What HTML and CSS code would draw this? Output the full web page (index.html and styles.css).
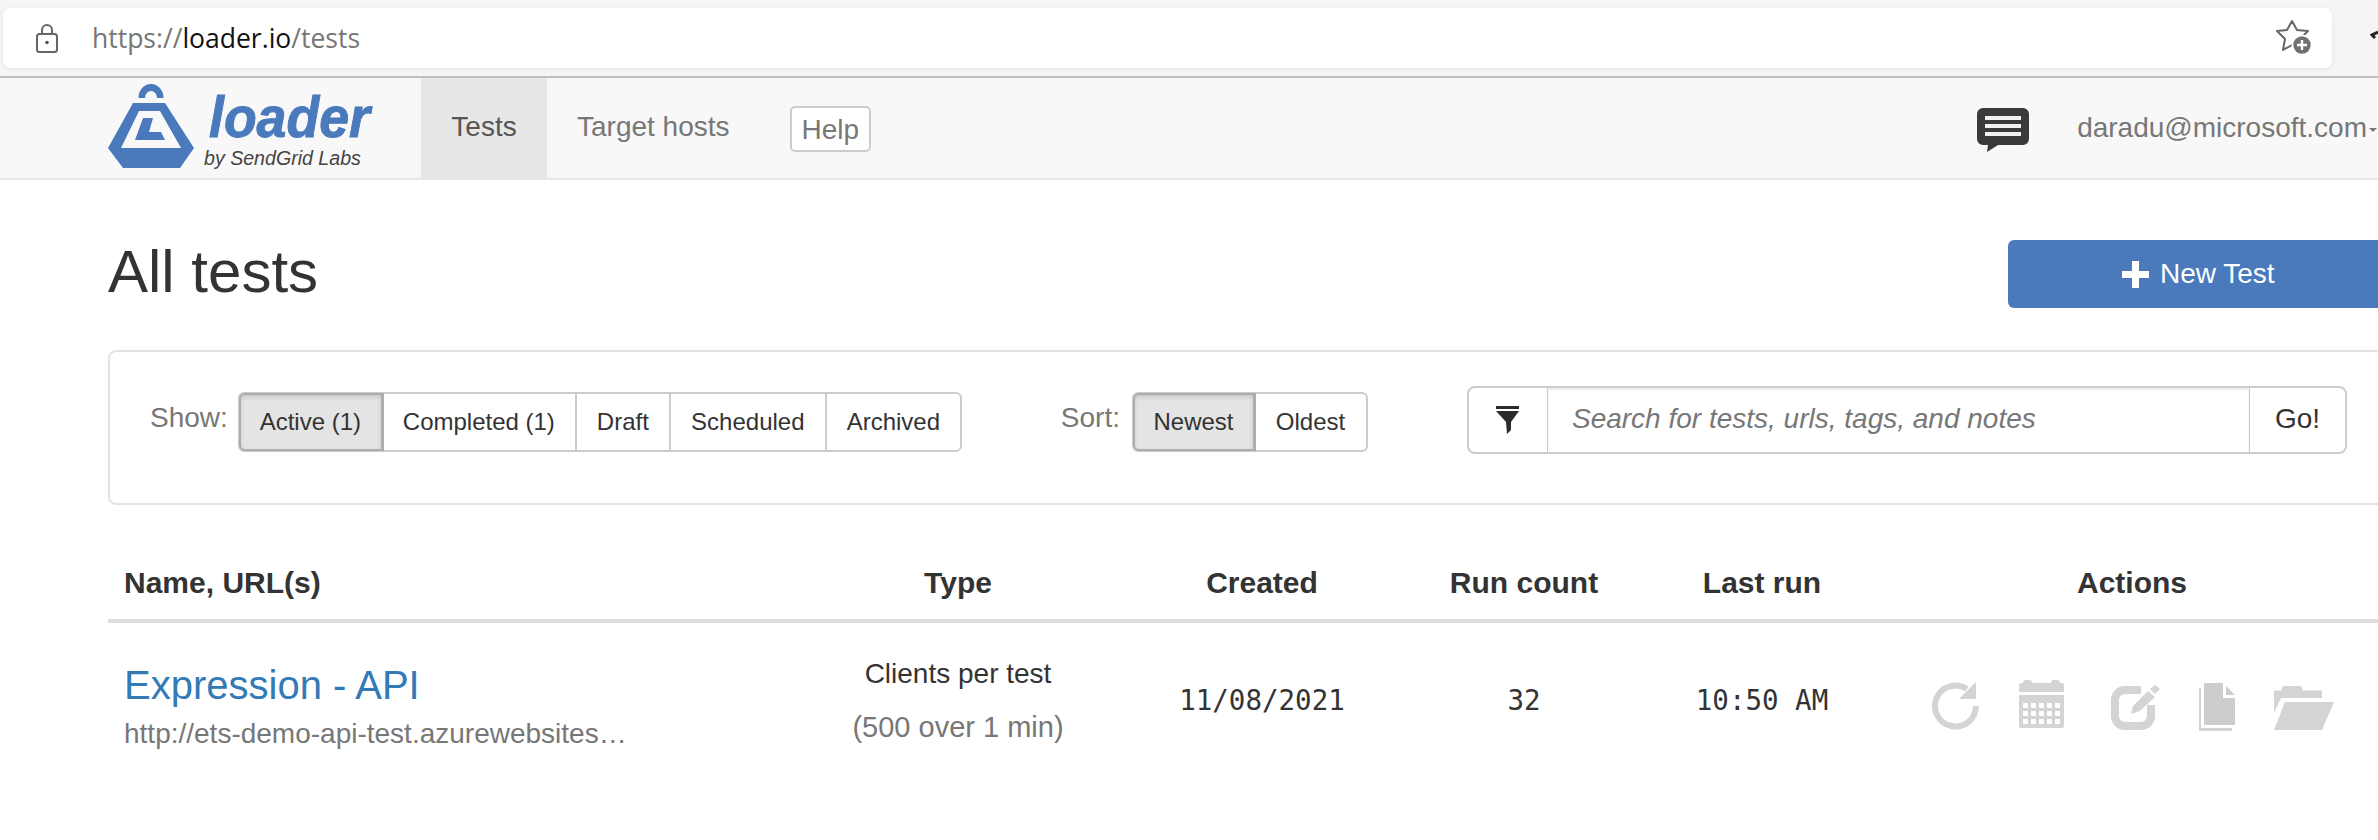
FILE: index.html
```html
<!DOCTYPE html>
<html lang="en">
<head>
    <meta charset="UTF-8">
    <meta name="viewport" content="width=device-width, initial-scale=1.0">
    <title>loader.io - All tests</title>
    <link rel="stylesheet" href="styles.css">
</head>
<body>
    <!-- browser chrome -->
    <div class="browser-bar">
        <div class="url-box">
            <svg class="lock-icon" viewBox="0 0 22 30" width="22" height="30">
                <path d="M6 11V7a5 5 0 0 1 10 0v4" fill="none" stroke="#666" stroke-width="2"/>
                <rect x="1" y="11" width="20" height="18" rx="2.5" fill="none" stroke="#666" stroke-width="2"/>
                <circle cx="11" cy="19.5" r="1.8" fill="#555"/>
            </svg>
            <div class="url-text">https://<span class="url-host">loader.io</span>/tests</div>
            <svg class="star-icon" viewBox="0 0 36 36" width="36" height="36">
                <path d="M16 1l5 9 11 1-8 8 2 11-10-5-9 5 2-11-8-8 10-1z" fill="none" stroke="#666" stroke-width="2" stroke-linejoin="round"/>
                <circle cx="26" cy="25" r="10.500" fill="#fff"/>
                <circle cx="26" cy="25" r="8.700" fill="#707070"/>
                <path d="M26 20v10M21 25h10" stroke="#fff" stroke-width="2.400"/>
            </svg>
        </div>
        <svg class="ext-icon" viewBox="0 0 8 14" width="8" height="14">
            <path d="M8 2L2 5l3 3" fill="none" stroke="#222" stroke-width="3"/>
        </svg>
    </div>

    <!-- site nav -->
    <nav class="navbar">
        <a class="brand">
            <svg class="brand-mark" viewBox="0 0 86 84" width="86" height="84">
                <path d="M30.500 14a12.500 14 0 0 1 25 0h-6.500a6 7 0 0 0-12 0z" fill="#4a7abc"/>
                <path fill-rule="evenodd" fill="#4a7abc" d="M25 19h32l29 45-14 20H15L0 64zM31 27L13 64h60L52 27z"/>
                <path d="M35 34h10l-4 14h12l4 8H27z" fill="#4a7abc"/>
            </svg>
            <div class="brand-text">
                <div class="brand-name">loader</div>
                <div class="brand-sub">by SendGrid Labs</div>
            </div>
        </a>
        <a class="nav-link active">Tests</a>
        <a class="nav-link">Target hosts</a>
        <a class="help-btn">Help</a>
        <div class="nav-right">
            <svg class="chat-icon" viewBox="0 0 52 44" width="52" height="44">
                <path d="M6 0h40a6 6 0 0 1 6 6v25a6 6 0 0 1-6 6H21l-11 7 1-7H6a6 6 0 0 1-6-6V6a6 6 0 0 1 6-6z" fill="#3a3a3a"/>
                <path d="M8 8h36v4H8zM8 16h36v4H8zM8 24h36v4H8z" fill="#f0f0f0"/>
            </svg>
            <div class="user-menu">daradu@microsoft.com<span class="caret"></span></div>
        </div>
    </nav>

    <div class="container">
        <div class="page-head">
            <h1>All tests</h1>
            <a class="new-test">
                <svg viewBox="0 0 27 27" width="27" height="27"><path d="M10 0h7v10h10v7H17v10h-7V17H0v-7h10z" fill="#fff"/></svg>
                New Test
            </a>
        </div>

        <div class="filter-panel">
            <span class="filter-label show-label">Show:</span>
            <div class="btn-group show-group">
                <a class="seg seg-on w-active">Active (1)</a>
                <a class="seg w-completed">Completed (1)</a>
                <a class="seg w-draft">Draft</a>
                <a class="seg w-scheduled">Scheduled</a>
                <a class="seg w-archived">Archived</a>
            </div>
            <span class="filter-label sort-label">Sort:</span>
            <div class="btn-group sort-group">
                <a class="seg seg-on w-newest">Newest</a>
                <a class="seg w-oldest">Oldest</a>
            </div>
            <div class="search-group">
                <div class="search-filter">
                    <svg viewBox="0 0 23 28" width="23" height="28">
                        <path d="M0 0h23v3H0zM0 5h23l-8 11v8l-4 4-1-12z" fill="#2b2b2b"/>
                    </svg>
                </div>
                <div class="search-input">Search for tests, urls, tags, and notes</div>
                <div class="search-go">Go!</div>
            </div>
        </div>

        <table class="tests">
            <thead>
                <tr>
                    <th class="col-name">Name, URL(s)</th>
                    <th class="col-type">Type</th>
                    <th class="col-created">Created</th>
                    <th class="col-runs">Run count</th>
                    <th class="col-last">Last run</th>
                    <th class="col-actions">Actions</th>
                </tr>
            </thead>
            <tbody>
                <tr>
                    <td>
                        <a class="test-name">Expression - API</a>
                        <div class="test-url">http://ets-demo-api-test.azurewebsites…</div>
                    </td>
                    <td class="center">
                        <div class="type-main">Clients per test</div>
                        <div class="type-sub">(500 over 1 min)</div>
                    </td>
                    <td class="center mono">11/08/2021</td>
                    <td class="center mono">32</td>
                    <td class="center mono">10:50 AM</td>
                    <td>
                        <div class="actions">
                            <svg class="ic-refresh" viewBox="0 0 48 48" width="48" height="48">
                                <path d="M44 24A20.500 20.500 0 1 1 35 7" fill="none" stroke="#d4d4d4" stroke-width="6"/>
                                <path d="M44 0v17H27z" fill="#d4d4d4"/>
                            </svg>
                            <svg class="ic-calendar" viewBox="0 0 45 48" width="45" height="48">
                                <path fill="#d4d4d4" d="M7 0h3a3 3 0 0 1 3 3h19a3 3 0 0 1 3-3h3a3 3 0 0 1 3 3h2a2 2 0 0 1 2 2v7H0V5a2 2 0 0 1 2-2h2a3 3 0 0 1 3-3z"/>
                                <path fill="#d4d4d4" fill-rule="evenodd" d="M0 15h45v31a2 2 0 0 1-2 2H2a2 2 0 0 1-2-2zM4 23v5h5v-5zM12 23v5h5v-5zM20 23v5h5v-5zM28 23v5h5v-5zM36 23v5h5v-5zM4 31v5h5v-5zM12 31v5h5v-5zM20 31v5h5v-5zM28 31v5h5v-5zM36 31v5h5v-5zM4 39v5h5v-5zM12 39v5h5v-5zM20 39v5h5v-5zM28 39v5h5v-5zM36 39v5h5v-5z"/>
                            </svg>
                            <svg class="ic-edit" viewBox="0 0 50 46" width="50" height="46">
                                <path d="M30 5H14A10 10 0 0 0 4 15v16a10 10 0 0 0 10 10h16a10 10 0 0 0 10-10V20" fill="none" stroke="#d4d4d4" stroke-width="8"/>
                                <path d="M20 29l2-8L37 6l7 6-15 14zM39 4l5-4 5 4-5 5z" fill="#d4d4d4"/>
                            </svg>
                            <svg class="ic-files" viewBox="0 0 36 48" width="36" height="48">
                                <path d="M0 5h2v40h31v3H0z" fill="#d4d4d4"/>
                                <path d="M5 0h19v15h12v27H5zM27 3l9 9h-9z" fill="#cdcdcd"/>
                            </svg>
                            <svg class="ic-folder" viewBox="0 0 60 44" width="60" height="44">
                                <path d="M0 4.500h8a3 3 0 0 1 3-4.500h14a3 3 0 0 1 3 4.500h20V12H7L0 27z" fill="#d4d4d4"/>
                                <path d="M11 16h49L48 44H0z" fill="#d4d4d4"/>
                            </svg>
                        </div>
                    </td>
                </tr>
            </tbody>
        </table>
    </div>
</body>
</html>
```

FILE: styles.css
```css
/* General page styles */
html, body {
    margin: 0;
    padding: 0;
    width: 2378px;
    height: 840px;
    overflow: hidden;
    background: #fff;
}
body {
    font-family: "Liberation Sans", Arial, sans-serif;
    color: #333;
}
a {
    text-decoration: none;
}

/* Browser chrome */
.browser-bar {
    height: 68px;
    background: #f5f5f5;
    border-bottom: 2px solid #bdbdbd;
    display: flex;
    align-items: flex-start;
    padding: 8px 0 0 3px;
}
.url-box {
    width: 2330px;
    height: 60px;
    background: #fff;
    border-radius: 8px;
    box-shadow: 0 1px 4px rgba(0, 0, 0, 0.08);
    display: flex;
    align-items: center;
}
.lock-icon {
    margin-left: 33px;
}
.url-text {
    margin-left: 34px;
    font-family: "Open Sans", "Noto Sans", sans-serif;
    font-size: 26.5px;
    color: #767676;
}
.url-host {
    color: #111;
}
.star-icon {
    margin-left: auto;
    margin-right: 20px;
}
.ext-icon {
    margin: 22px 0 0 38px;
}

/* Site nav */
.navbar {
    height: 100px;
    background: #f8f8f8;
    border-bottom: 2px solid #e7e7e7;
    display: flex;
    align-items: stretch;
    padding-left: 108px;
}
.brand {
    display: flex;
    width: 313px;
    padding-top: 6px;
    box-sizing: border-box;
}
.brand-mark {
    flex: none;
}
.brand-text {
    margin-left: 10px;
}
.brand-name {
    font-size: 57px;
    font-weight: bold;
    font-style: italic;
    line-height: 60px;
    color: #4a7abc;
    margin: 3px 0 0 5px;
    transform: scaleX(0.94);
    transform-origin: left;
    -webkit-text-stroke: 1px #4a7abc;
}
.brand-sub {
    font-size: 19.6px;
    font-style: italic;
    color: #444;
    line-height: 22px;
}
.nav-link {
    font-size: 28px;
    color: #777;
    line-height: 98px;
    padding: 0 30px;
}
.nav-link.active {
    color: #555;
    background: #e7e7e7;
    width: 126px;
    padding: 0;
    text-align: center;
}
.help-btn {
    align-self: center;
    margin: 2px 0 0 30px;
    height: 46px;
    line-height: 44px;
    padding: 0 10px;
    box-sizing: border-box;
    font-size: 28px;
    color: #777;
    background: #fff;
    border: 2px solid #ccc;
    border-radius: 5px;
}
.nav-right {
    margin-left: auto;
    display: flex;
    align-items: center;
}
.chat-icon {
    margin: 4px 48px 0 0;
}
.user-menu {
    font-size: 28px;
    color: #777;
    white-space: nowrap;
}
.caret {
    display: inline-block;
    border-top: 4px solid #777;
    border-left: 4px solid transparent;
    border-right: 4px solid transparent;
    vertical-align: middle;
    margin: 0 1px 0 2px;
}

/* Content */
.container {
    width: 2320px;
    margin-left: 108px;
}
.page-head {
    display: flex;
    justify-content: space-between;
    align-items: flex-start;
    height: 170px;
}
h1 {
    margin: 59px 0 0 0;
    font-size: 60px;
    font-weight: normal;
    line-height: 66px;
    color: #333;
}
.new-test {
    margin: 60px 0 0 0;
    width: 420px;
    height: 68px;
    box-sizing: border-box;
    padding-left: 114px;
    background: #4a7abc;
    color: #fff;
    border-radius: 6px;
    font-size: 28px;
    display: flex;
    align-items: center;
    gap: 11px;
}

/* Filter panel */
.filter-panel {
    height: 155px;
    box-sizing: border-box;
    border: 2px solid #e3e3e3;
    border-radius: 8px;
    display: flex;
    align-items: flex-start;
}
.filter-label {
    font-size: 28px;
    line-height: 32px;
    color: #777;
    margin-top: 50px;
}
.show-label {
    margin-left: 40px;
}
.sort-label {
    margin-left: 99px;
}
.btn-group {
    display: flex;
    height: 60px;
    margin-top: 40px;
    border: 2px solid #ccc;
    border-radius: 6px;
    box-sizing: border-box;
    background: #fff;
}
.show-group {
    margin-left: 10px;
}
.sort-group {
    margin-left: 12px;
}
.seg {
    font-size: 24px;
    color: #333;
    line-height: 56px;
    text-align: center;
    border-right: 2px solid #ccc;
    box-sizing: border-box;
}
.seg:last-child {
    border-right: none;
}
.seg-on {
    background: #e4e4e4;
    box-shadow: inset 0 3px 5px rgba(0, 0, 0, 0.125);
    border-right-color: #adadad;
    outline: 2px solid #adadad;
    outline-offset: -1px;
    border-radius: 5px 0 0 5px;
}
.w-active { width: 143px; }
.w-completed { width: 194px; }
.w-draft { width: 94px; }
.w-scheduled { width: 156px; }
.w-archived { width: 133px; }
.w-newest { width: 121px; }
.w-oldest { width: 111px; }

.search-group {
    display: flex;
    width: 880px;
    height: 68px;
    margin: 34px 0 0 99px;
    border: 2px solid #ccc;
    border-radius: 8px;
    box-sizing: border-box;
}
.search-filter {
    width: 78px;
    border-right: 1px solid #ccc;
    display: flex;
    align-items: center;
    justify-content: center;
}
.search-input {
    flex: 1;
    padding-left: 24px;
    font-size: 28px;
    font-style: italic;
    color: #777;
    line-height: 62px;
    box-shadow: inset 0 2px 2px rgba(0, 0, 0, 0.075);
}
.search-go {
    width: 96px;
    border-left: 1px solid #ccc;
    box-sizing: border-box;
    font-size: 28px;
    text-align: center;
    line-height: 62px;
    color: #333;
}

/* Tests table */
.tests {
    width: 2320px;
    table-layout: fixed;
    border-collapse: collapse;
}
.tests th {
    height: 116px;
    padding: 42px 0 0 0;
    box-sizing: border-box;
    font-size: 30px;
    font-weight: bold;
    color: #333;
    text-align: center;
    border-bottom: 4px solid #ddd;
}
.tests th.col-name {
    text-align: left;
    padding-left: 16px;
    width: 702px;
}
.col-type { width: 296px; }
.col-created { width: 312px; }
.col-runs { width: 212px; }
.col-last { width: 264px; }
.tests th.col-actions {
    width: 534px;
    padding-right: 58px;
}
.tests td {
    padding: 0;
    vertical-align: top;
}
.test-name {
    display: block;
    margin: 39px 0 0 16px;
    font-size: 40px;
    line-height: 46px;
    color: #337ab7;
}
.test-url {
    margin: 6px 0 0 16px;
    font-size: 28px;
    line-height: 40px;
    color: #777;
}
.center {
    text-align: center;
}
.type-main {
    margin-top: 31px;
    font-size: 28px;
    line-height: 40px;
    color: #333;
}
.type-sub {
    margin-top: 13px;
    font-size: 29px;
    line-height: 40px;
    color: #777;
}
.tests td.mono {
    font-family: "DejaVu Sans Mono", "Liberation Mono", monospace;
    font-size: 27.5px;
    color: #333;
    padding-top: 57px;
    line-height: 40px;
}
.actions {
    display: flex;
    align-items: flex-start;
    padding: 57px 0 0 38px;
}
.ic-refresh {
    margin-top: 2px;
}
.ic-calendar {
    margin-left: 39px;
}
.ic-edit {
    margin: 5px 0 0 47px;
}
.ic-files {
    margin: 3px 0 0 38px;
}
.ic-folder {
    margin: 6px 0 0 39px;
}
```
